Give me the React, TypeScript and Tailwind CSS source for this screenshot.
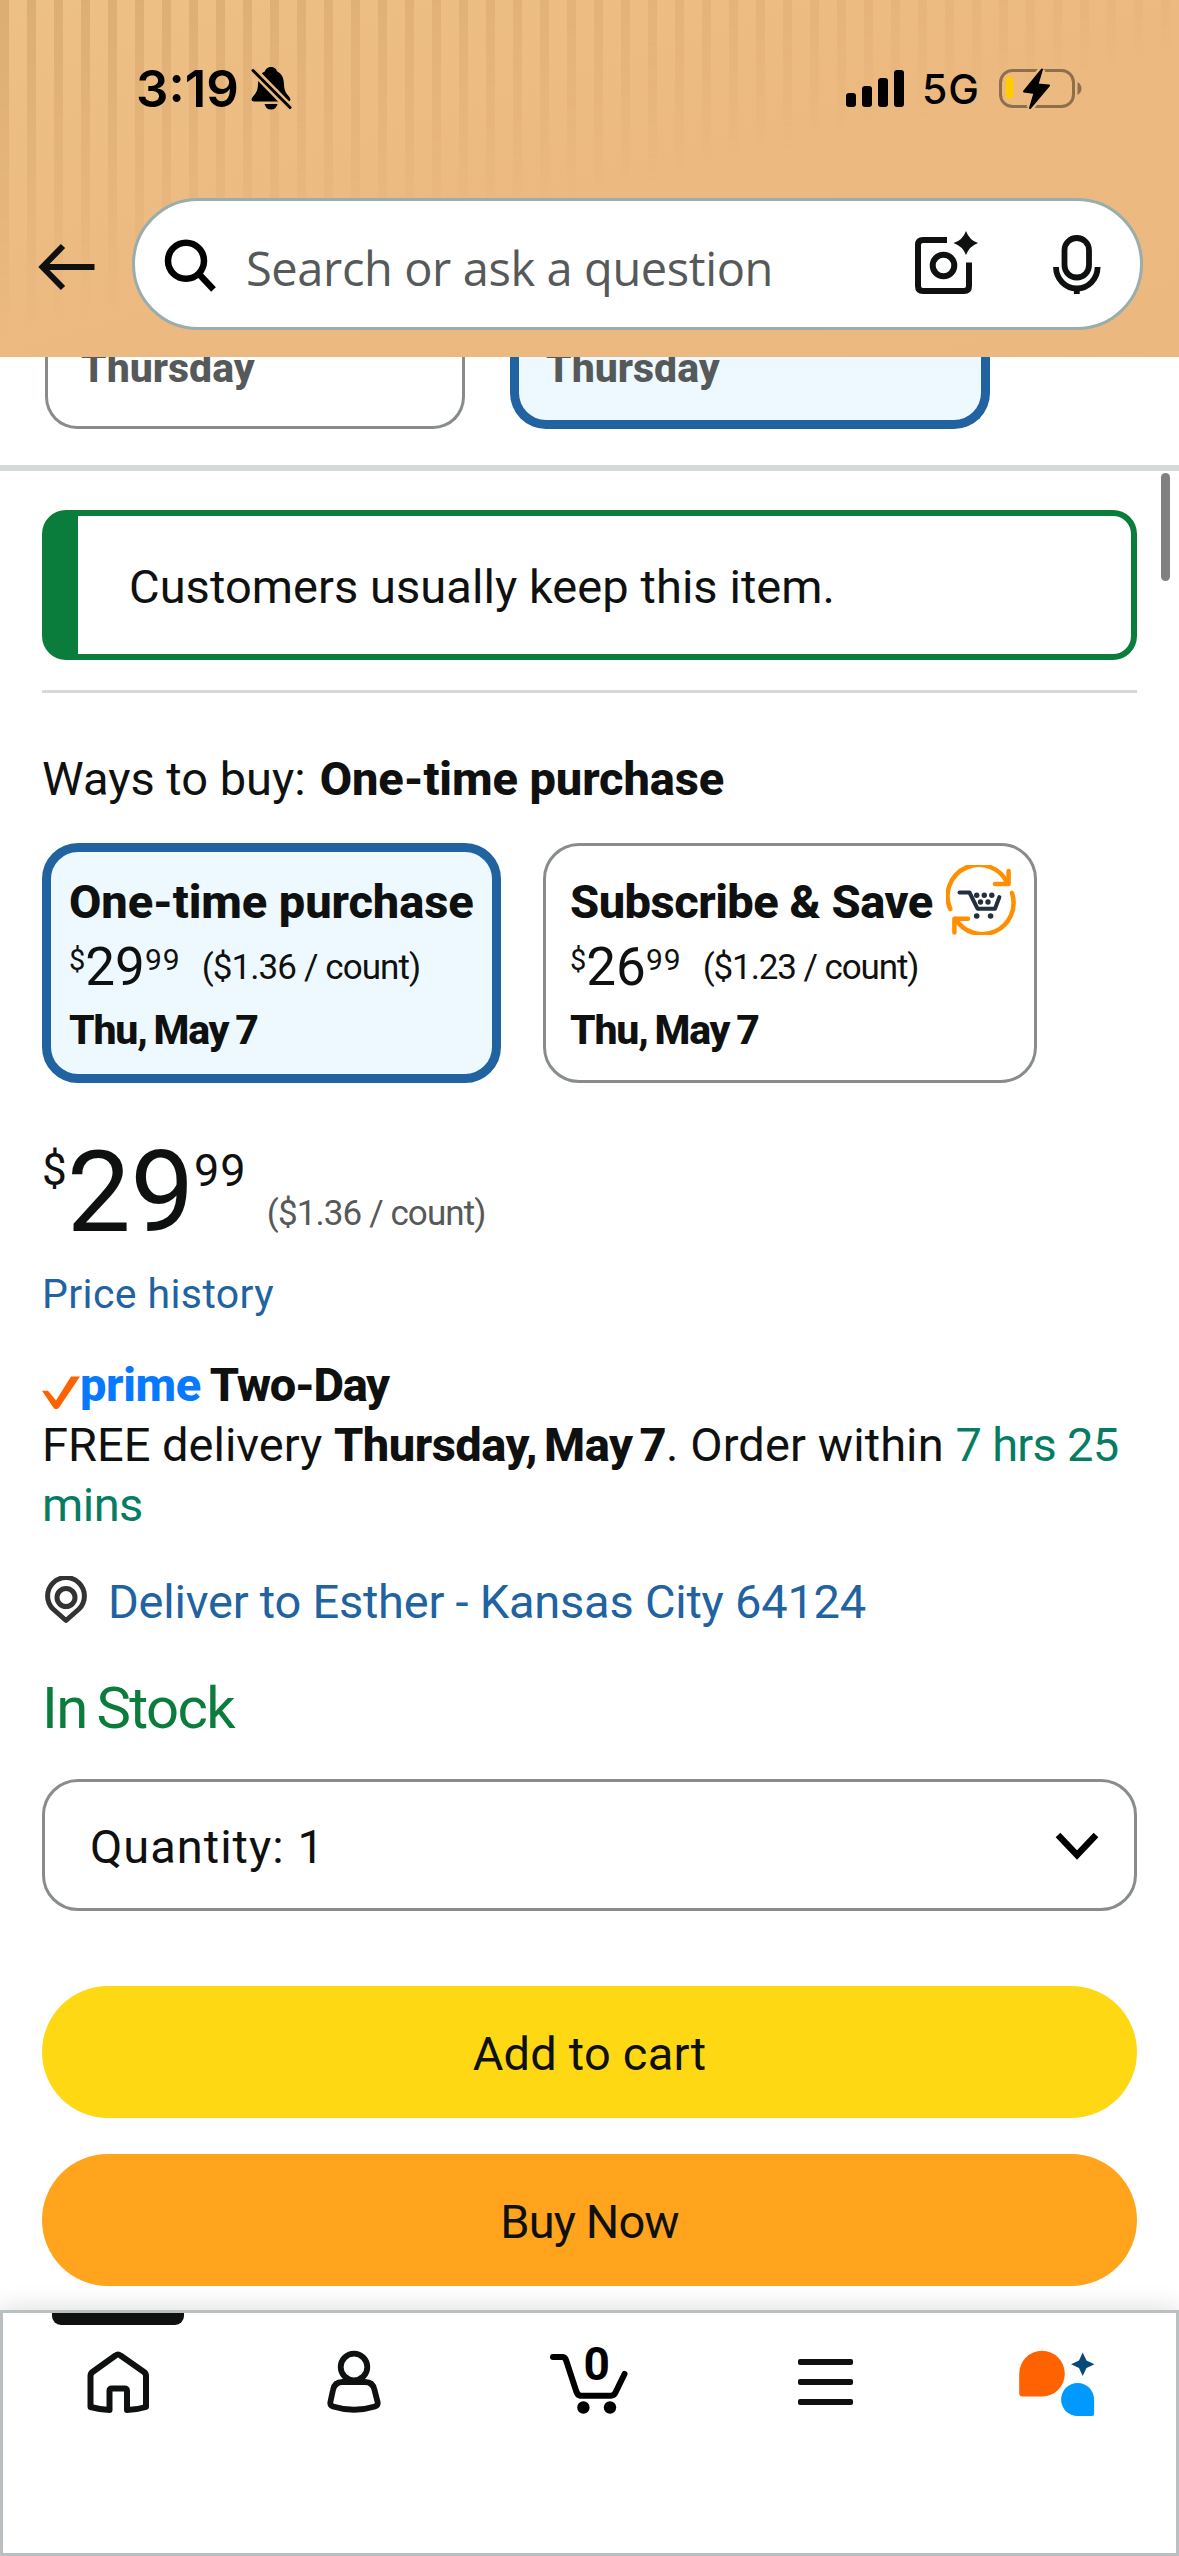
import type { ReactNode } from 'react';
import clsx from 'clsx';

interface BuyOption {
  title: string;
  whole: string;
  fraction: string;
  perCount: string;
  date: string;
  selected?: boolean;
}

const buyOptions: BuyOption[] = [
  {
    title: 'One-time purchase',
    whole: '29',
    fraction: '99',
    perCount: '($1.36 / count)',
    date: 'Thu, May 7',
    selected: true,
  },
  {
    title: 'Subscribe & Save',
    whole: '26',
    fraction: '99',
    perCount: '($1.23 / count)',
    date: 'Thu, May 7',
  },
];

function StatusBar() {
  return (
    <div className="flex h-44 items-center pl-[136px] pr-[95px] text-black">
      <span className="font-[Inter,sans-serif] text-[51px] font-semibold leading-none">3:19</span>
      <svg className="ml-[11px] h-[45px] w-[43px]" viewBox="0 0 43 45">
        <path d="M21 1C17 1 15.5 3.5 14.8 5.5C9.5 8 8.3 13 8 18C7.8 25 6 27 3 30.5C.5 33.5 1.5 35.5 4 35.5H38C40.5 35.5 41.5 33.5 39 30.5C36 27 34.2 25 34 18C33.7 13 32.5 8 27.2 5.5C26.5 3.5 25 1 21 1Z" />
        <path d="M14.5 38H27.5Q26 43.5 21 43.5Q16 43.5 14.5 38Z" />
        <path d="M2 3L41 43" stroke="#e9b87e" strokeWidth="8" />
        <path d="M3 4.5L40 41.5" stroke="#000" strokeWidth="3" strokeLinecap="round" />
      </svg>
      <div className="ml-auto flex items-end gap-[6px]">
        <div className="h-[14px] w-[10px] rounded-[3px] bg-black" />
        <div className="h-[21px] w-[10px] rounded-[3px] bg-black" />
        <div className="h-[29px] w-[10px] rounded-[3px] bg-black" />
        <div className="h-[37px] w-[10px] rounded-[3px] bg-black" />
      </div>
      <span className="ml-[18px] mt-[3px] font-[Inter,sans-serif] text-[41px] font-medium leading-none tracking-[1px]">
        5G
      </span>
      <svg className="ml-[18px] h-[45px] w-[86px]" viewBox="0 0 86 45">
        <rect x="2.5" y="4.5" width="73" height="36" rx="12" fill="none" stroke="#8f6f4b" strokeWidth="3" />
        <path d="M79.5 16Q83.5 18.5 83.5 22.5T79.5 29Z" fill="#8f6f4b" />
        <rect x="7.5" y="10.5" width="8" height="22" rx="4" fill="#ffcc00" />
        <path
          d="M44 3.5L39.5 18.5L51 19.5L32 42L36.5 27L26 25.5Z"
          stroke="#ecba80"
          strokeWidth="7"
        />
        <path
          d="M44 3.5L39.5 18.5L51 19.5L32 42L36.5 27L26 25.5Z"
          stroke="#000"
          strokeWidth="2"
          strokeLinejoin="round"
        />
      </svg>
    </div>
  );
}

function SearchBar() {
  return (
    <div className="flex items-center pl-9 pr-[36px] pt-[22px]">
      <svg className="mt-[6px] h-[50px] w-[60px] shrink-0" viewBox="0 0 60 50" fill="none" stroke="#0f1111" strokeWidth="6">
        <path d="M58.5 25H6" />
        <path d="M27 4L6.5 25L27 46" />
      </svg>
      <div className="ml-9 flex h-[132px] flex-1 items-center rounded-full border-3 border-[#9aadad] bg-white pl-[29px] pr-[38px]">
        <svg className="mt-[2px] h-[54px] w-[54px]" viewBox="0 0 54 54" fill="none" stroke="#000" strokeWidth="6.5">
          <circle cx="22" cy="22.8" r="18" />
          <path d="M34.5 35.5L49.5 51.5" />
        </svg>
        <span className="ml-[28px] pt-[9px] font-['Open_Sans',sans-serif] text-[47px] font-[450] leading-none tracking-[-0.4px] text-[#565959]">
          Search or ask a question
        </span>
        <svg className="mb-1 ml-auto h-[68px] w-[68px]" viewBox="0 0 68 68" fill="none" stroke="#0f1111" strokeWidth="6">
          <path d="M35 12H11Q6 12 6 17V58Q6 63 11 63H52Q57 63 57 58V34.5" />
          <circle cx="31.5" cy="37.5" r="10.8" />
          <path
            d="M54 3Q57.5 12.5 66 15Q57.5 18 54 27Q50.5 18 41.5 15Q50.5 12.5 54 3Z"
            fill="#0f1111"
            stroke="none"
          />
        </svg>
        <svg className="ml-[72px] h-[62px] w-[50px]" viewBox="0 0 50 62" fill="none" stroke="#0f1111" strokeWidth="5.8">
          <rect x="12.5" y="5" width="24.5" height="39.5" rx="12.2" />
          <path d="M4 34A20.8 21.5 0 0 0 45.6 34" />
          <path d="M24.8 55V61" />
        </svg>
      </div>
    </div>
  );
}

function SubscribeIcon() {
  return (
    <svg className="h-[70px] w-[70px]" viewBox="0 0 70 70" fill="none">
      <g stroke="#ff8f00" strokeWidth="4.5" strokeLinecap="round" strokeLinejoin="round">
        <path d="M4.3 44A31.3 31.3 0 0 1 61.5 18.5" />
        <path d="M62.6 6V19H49" />
        <path d="M66 28A31.3 31.3 0 0 1 9.5 54" />
        <path d="M8.4 67.5V53.8H22" />
      </g>
      <path
        d="M13.5 27.5H23.5L31.5 43.7H49L53.4 32"
        stroke="#232f3e"
        strokeWidth="4"
        strokeLinecap="round"
        strokeLinejoin="round"
      />
      <g fill="#232f3e">
        <circle cx="30.7" cy="30.3" r="2.7" />
        <circle cx="38.3" cy="30.3" r="2.7" />
        <circle cx="45.8" cy="30.3" r="2.7" />
        <circle cx="34.5" cy="37" r="2.7" />
        <circle cx="42" cy="37" r="2.7" />
        <circle cx="30.7" cy="51" r="2.8" />
        <circle cx="44.6" cy="51" r="2.8" />
      </g>
    </svg>
  );
}

function BuyOptionCard({ option }: { option: BuyOption }) {
  return (
    <div
      className={clsx(
        'h-60 rounded-[36px]',
        option.selected
          ? 'w-[459px] border-9 border-[#2162a1] bg-[#edf8ff] pl-[18px] pt-5'
          : 'w-[494px] border-3 border-[#888c8c] bg-white pl-[24px] pt-[26px]'
      )}
    >
      <div className="flex h-[60px] items-center whitespace-nowrap">
        <span
          className={clsx(
            'text-[47px] font-extrabold leading-[60px]',
            option.selected ? 'tracking-[-0.1px]' : 'tracking-[-0.5px]'
          )}
        >
          {option.title}
        </span>
        {!option.selected && (
          <div className="-mt-1 ml-[13px]">
            <SubscribeIcon />
          </div>
        )}
      </div>
      <div className="mt-[5px] flex items-start whitespace-nowrap">
        <span className="text-[29px] leading-[46px]">$</span>
        <span className="text-[53px] leading-[61px]">{option.whole}</span>
        <span className="text-[30px] leading-[46px] tracking-[1px]">{option.fraction}</span>
        <span
          className={clsx(
            'ml-[21px] text-[35px] leading-[61px]',
            option.selected ? 'tracking-[-0.9px]' : 'tracking-[-1.1px]'
          )}
        >
          {option.perCount}
        </span>
      </div>
      <p className="mt-[7px] text-[41px] font-extrabold leading-[50px] tracking-[-1.2px] [word-spacing:-2px]">
        {option.date}
      </p>
    </div>
  );
}

function NavItem({ active, children }: { active?: boolean; children: ReactNode }) {
  return (
    <div className="flex flex-col items-center">
      <div className={clsx('h-3 w-[132px] rounded-b-[9px]', active && 'bg-[#0f1111]')} />
      <div className="mt-[17px] flex h-[80px] items-center justify-center">{children}</div>
    </div>
  );
}

function BottomNav() {
  return (
    <nav className="h-[246px] border-3 border-[#babfc2] bg-white shadow-[0_0_24px_rgba(15,17,17,0.16)]">
      <div className="-mx-[3px] grid grid-cols-5">
        <NavItem active>
          <svg className="h-[65px] w-[64px]" viewBox="0 0 64 65" fill="none" stroke="#0f1111" strokeWidth="6" strokeLinejoin="round">
            <path d="M29.5 5.5Q32 3.5 34.5 5.5L58 22Q60 23.5 60 26V57Q50 60 41 60V41Q41 38.5 38.5 38.5H26Q23.5 38.5 23.5 41V60Q14 59.5 4.5 57V26Q4.5 23.5 6.5 22Z" />
          </svg>
        </NavItem>
        <NavItem>
          <svg className="h-[66px] w-[58px]" viewBox="0 0 58 66" fill="none" stroke="#0f1111" strokeWidth="5.8" strokeLinejoin="round">
            <circle cx="29" cy="18" r="13.3" />
            <path d="M17.5 33H40Q48 33 49.5 41L52.6 53Q53.2 56.5 50 57.5Q29 64 8 57.5Q4.8 56.5 5.4 53L8 41Q9.5 33 17.5 33Z" />
          </svg>
        </NavItem>
        <NavItem>
          <div className="relative -mt-1">
            <svg className="h-[70px] w-[80px]" viewBox="0 0 80 70" fill="none" stroke="#000" strokeWidth="6" strokeLinecap="round" strokeLinejoin="round">
              <path d="M4 12H13Q16 12 17 15L27.5 47Q29 50.7 32 50.7H62Q65 50.7 66.5 47.5L75.5 29" />
              <circle cx="34.4" cy="62.5" r="6.2" fill="#000" stroke="none" />
              <circle cx="61" cy="62.5" r="6.2" fill="#000" stroke="none" />
            </svg>
            <span className="absolute left-[34px] top-[-4px] text-[46px] font-bold leading-[46px] text-black">0</span>
          </div>
        </NavItem>
        <NavItem>
          <div className="flex flex-col gap-[14px]">
            <div className="h-[6px] w-[55px] rounded-xs bg-[#0f1111]" />
            <div className="h-[6px] w-[55px] rounded-xs bg-[#0f1111]" />
            <div className="h-[6px] w-[55px] rounded-xs bg-[#0f1111]" />
          </div>
        </NavItem>
        <NavItem>
          <svg className="mr-2 mt-[2px] h-[68px] w-[78px]" viewBox="0 0 78 68">
            <path d="M24 1.8A22.8 22.9 0 0 1 24 47.6H4.5Q1.2 47.6 1.2 44V24.7A22.8 22.9 0 0 1 24 1.8Z" fill="#ff6200" />
            <path d="M59.6 34A16.5 16.5 0 0 1 76.1 50.5V65Q76.1 67 74 67H59.6A16.5 16.5 0 0 1 59.6 34Z" fill="#0099ff" />
            <path d="M64.7 3.5L68.5 11.5L76.5 15.3L68.5 19L64.7 27L61 19L53 15.3L61 11.5Z" fill="#08497a" />
          </svg>
        </NavItem>
      </div>
    </nav>
  );
}

export default function App() {
  return (
    <div className="relative flex h-[2556px] w-[1179px] flex-col overflow-hidden bg-white font-[Roboto,sans-serif] font-[450] text-[#0f1111]">
      {/* Header */}
      <header className="relative h-[357px] shrink-0 bg-linear-to-br from-[#edc085] via-[#ecba81] to-[#ebb880]">
        <div className="absolute inset-0 bg-[repeating-linear-gradient(90deg,rgba(150,95,40,0.19)_0px,rgba(150,95,40,0.19)_9px,transparent_9px,transparent_27px)] mask-[linear-gradient(166.6deg,black,transparent_53%)]" />
        <div className="relative">
          <StatusBar />
          <SearchBar />
        </div>
      </header>

      {/* Delivery options, scrolled under the header */}
      <div className="flex h-[108px] shrink-0 items-start gap-[45px] overflow-hidden pl-[45px] text-[41px] font-extrabold leading-10 text-[#565959]">
        <div className="h-[72px] w-[420px] rounded-b-[32px] border-3 border-t-0 border-[#888c8c] pl-[33px]">
          <p className="-mt-[9px]">Thursday</p>
        </div>
        <div className="h-[72px] w-[480px] rounded-b-[36px] border-9 border-t-0 border-[#2162a1] bg-[#edf8ff] pl-[27px]">
          <p className="-mt-[9px]">Thursday</p>
        </div>
      </div>
      <div className="h-[6px] shrink-0 bg-[#d5d9d9]" />

      {/* Product details */}
      <main className="px-[42px] pt-[39px]">
        <div className="flex h-[150px] items-center rounded-[24px] border-6 border-l-36 border-[#0a7c3b] pl-[51px] pt-[4px]">
          <p className="text-[47px] tracking-[0.06px]">Customers usually keep this item.</p>
        </div>
        <div className="mt-[30px] h-[3px] bg-[#d5d9d9]" />

        <div className="mt-14 flex text-[47px] leading-[60px]">
          <span>Ways to buy:</span>
          <span className="ml-[14px] font-extrabold tracking-[-0.1px]">One-time purchase</span>
        </div>
        <div className="mt-[34px] flex gap-[42px]">
          {buyOptions.map((option) => (
            <BuyOptionCard key={option.title} option={option} />
          ))}
        </div>

        <div className="mt-12 flex items-start">
          <span className="text-[44px] leading-[79px]">$</span>
          <span className="text-[114px] leading-[122px] tracking-[-0.5px]">29</span>
          <span className="text-[45px] leading-[79px] tracking-[1.2px]">99</span>
          <span className="ml-[20px] mt-[53px] text-[35px] leading-[60px] tracking-[-0.9px] text-[#565959]">
            ($1.36 / count)
          </span>
        </div>
        <a className="mt-[11px] block text-[41px] leading-[60px] tracking-[0.4px] text-[#2162a1]">Price history</a>

        <div className="mt-[31px] text-[47px] leading-[60px]">
          <div className="flex items-center font-extrabold">
            <svg className="mt-4 h-[34px] w-[38px]" viewBox="0 0 38 34">
              <path d="M0 14.7H6L14 24.5L29 0.5H38L17.5 31Q14 35.5 11 31Z" fill="#ff6200" />
            </svg>
            <span className="tracking-[-0.4px] text-[#0779ff]">prime</span>
            <span className="ml-[9px] tracking-[-1.3px]">Two-Day</span>
          </div>
          <p className="whitespace-nowrap">
            FREE delivery{' '}
            <span className="font-extrabold tracking-[-0.5px] [word-spacing:-4.2px]">Thursday, May 7</span>
            <span className="tracking-[0.1px]">. Order within </span>
            <span className="tracking-[-0.7px] text-[#067d62]">7 hrs 25</span>
          </p>
          <p className="tracking-[-0.5px] text-[#067d62]">mins</p>
        </div>

        <div className="mt-[37px] flex items-center">
          <svg className="-mt-1 ml-[3px] h-[48px] w-[42px]" viewBox="0 0 42 48" fill="none" stroke="#333" strokeWidth="5">
            <path d="M21 44.5L8 33A18.4 18.4 0 1 1 34 33Z" strokeLinejoin="round" />
            <circle cx="21" cy="21.5" r="9" />
          </svg>
          <a className="ml-[21px] text-[47px] leading-[60px] tracking-[-0.23px] text-[#2162a1]">
            Deliver to Esther - Kansas City 64124
          </a>
        </div>
        <p className="mt-[41px] text-[58px] leading-[70px] tracking-[-1.6px] [word-spacing:-3px] text-[#0a7c3b]">In Stock</p>

        <div className="mt-9 flex h-[132px] items-center rounded-[36px] border-3 border-[#888c8c] pl-[45px] pr-[35px] text-[47px]">
          <span className="pt-1 tracking-[1px]">Quantity:</span>
          <span className="ml-[13px] pt-1">1</span>
          <svg className="ml-auto mt-[2px] h-[30px] w-[44px]" viewBox="0 0 44 30" fill="none" stroke="#000" strokeWidth="6.5">
            <path d="M3 4L22 24L41 4" />
          </svg>
        </div>

        <button className="mt-[75px] flex h-[132px] w-full items-center justify-center rounded-full bg-[#ffd814] pt-[4px] text-[47px] tracking-[0.2px]">
          Add to cart
        </button>
        <button className="mt-9 flex h-[132px] w-full items-center justify-center rounded-full bg-[#ffa41c] pt-[4px] text-[47px] tracking-[-0.9px]">
          Buy Now
        </button>
      </main>

      <div className="mt-auto">
        <BottomNav />
      </div>

      {/* Scroll thumb */}
      <div className="absolute right-[9px] top-[473px] h-[108px] w-[9px] rounded-full bg-[#808080]" />
    </div>
  );
}
